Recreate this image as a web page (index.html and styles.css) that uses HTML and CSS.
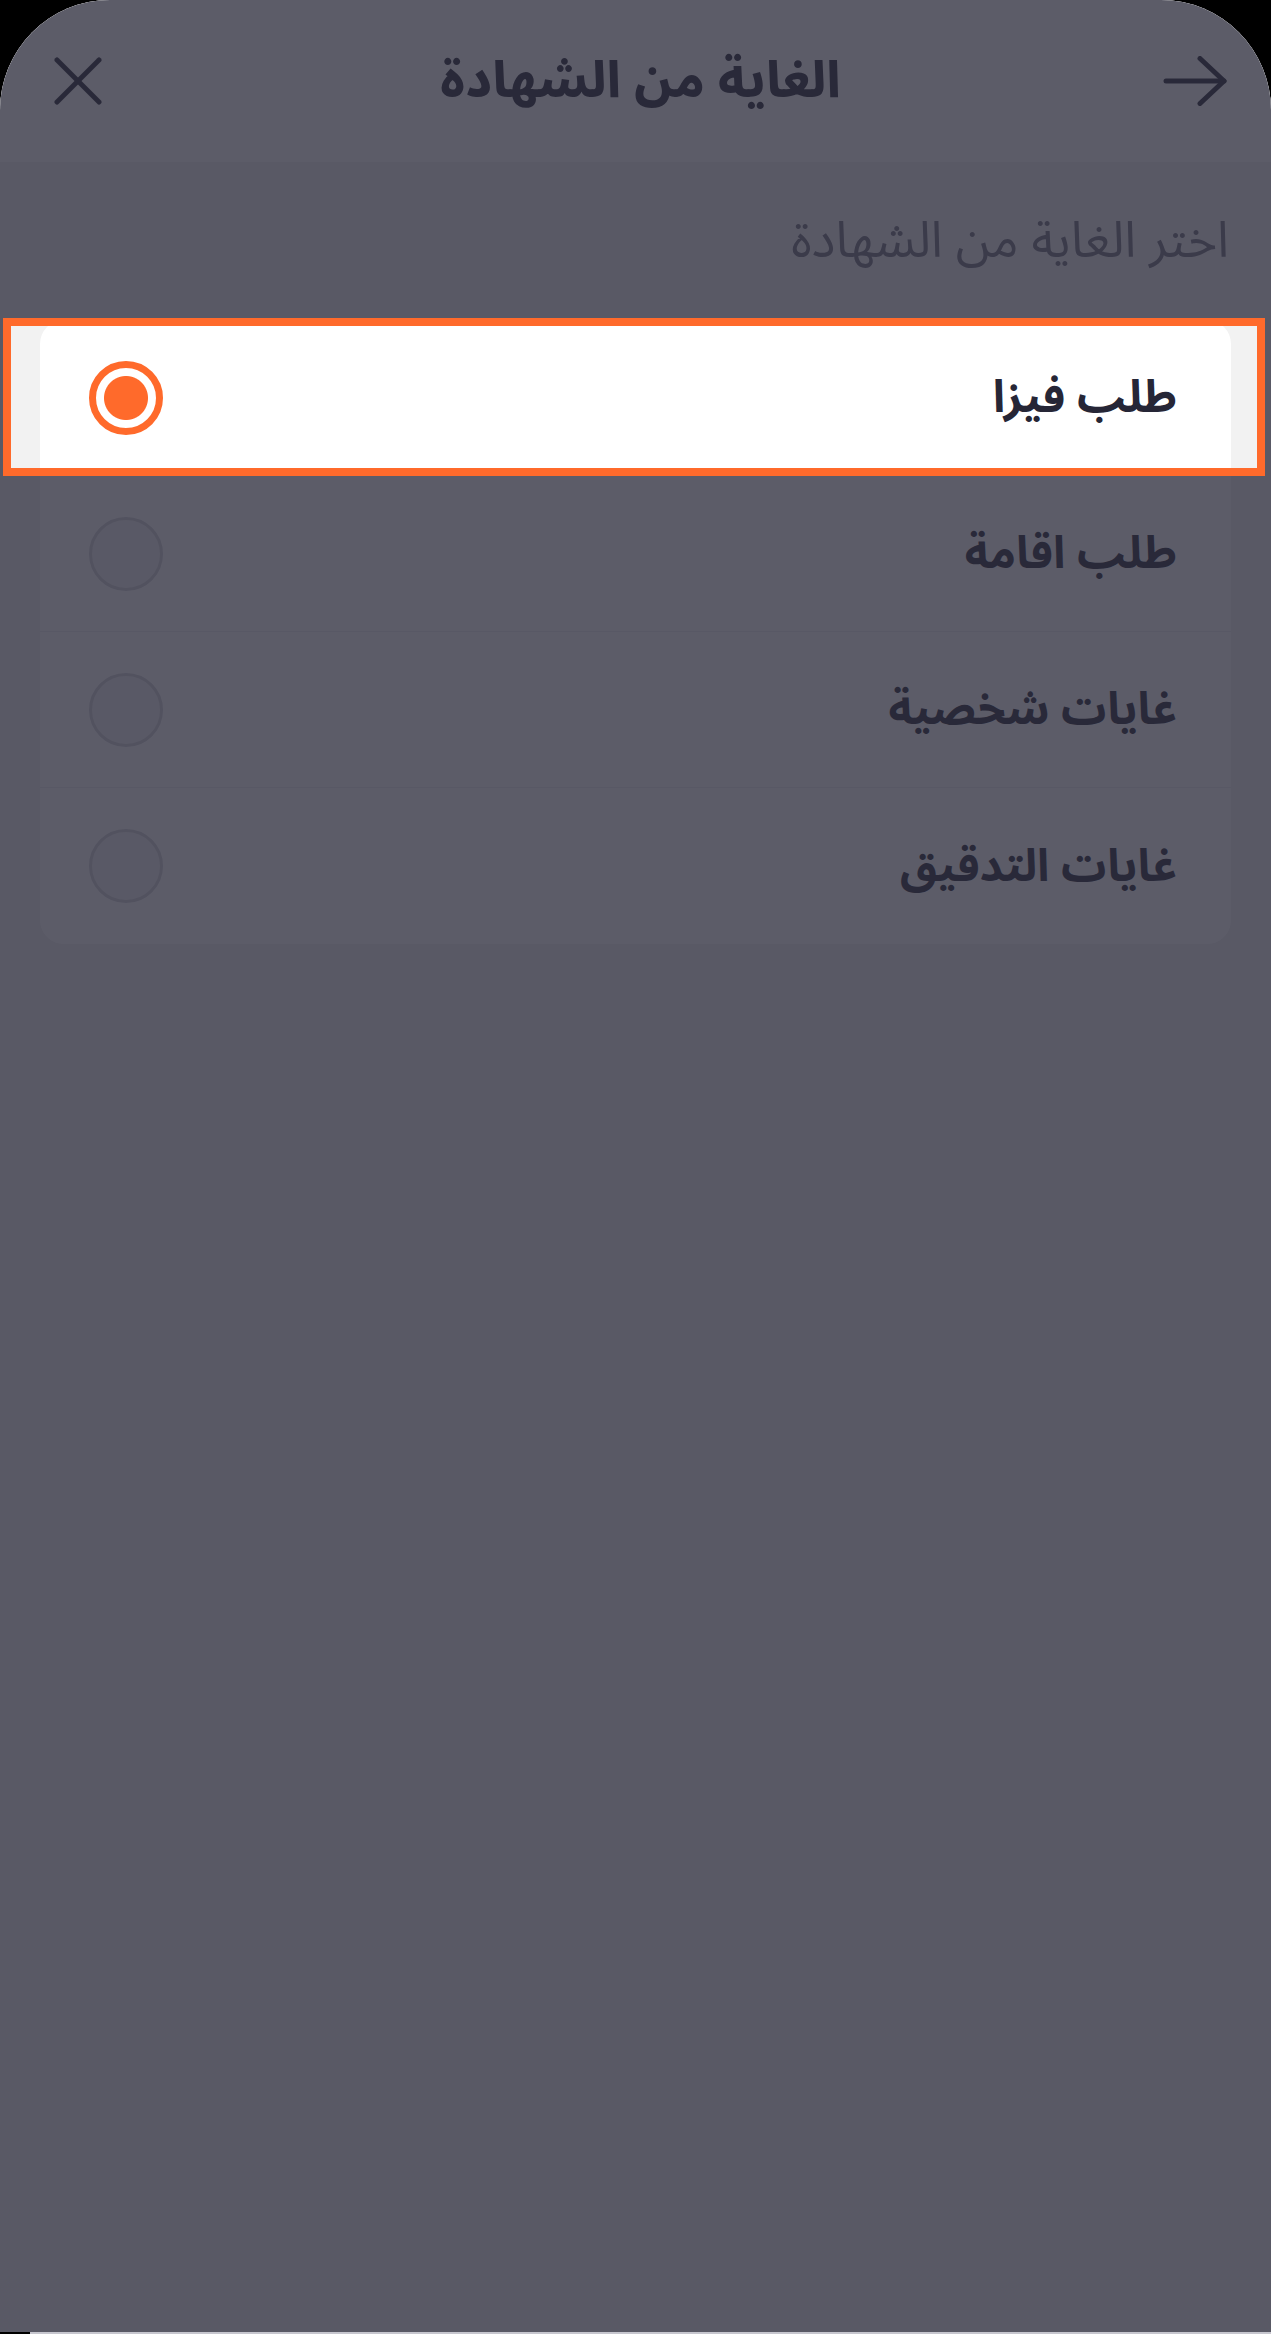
FILE: index.html
```html
<!DOCTYPE html>
<html lang="ar" dir="rtl">
<head>
    <meta charset="UTF-8">
    <meta name="viewport" content="width=device-width, initial-scale=1.0">
    <title>الغاية من الشهادة</title>
    <link rel="stylesheet" href="styles.css">
</head>
<body>
    <div class="screen">
        <header class="top-bar">
            <button class="icon-btn back-btn" aria-label="رجوع">
                <svg width="64" height="50" viewBox="0 0 64 50" fill="none" stroke="currentColor" stroke-width="5" stroke-linecap="round" stroke-linejoin="round">
                    <line x1="3" y1="25" x2="61" y2="25" />
                    <polyline points="37,2.5 61,25 37,47.5" />
                </svg>
            </button>
            <h1 class="page-title">الغاية من الشهادة</h1>
            <button class="icon-btn close-btn" aria-label="إغلاق">
                <svg width="48" height="48" viewBox="0 0 48 48" fill="none" stroke="currentColor" stroke-width="5" stroke-linecap="round">
                    <line x1="3" y1="3" x2="45" y2="45" />
                    <line x1="45" y1="3" x2="3" y2="45" />
                </svg>
            </button>
        </header>

        <main class="content">
            <p class="hint">اختر الغاية من الشهادة</p>

            <div class="options">
                <label class="option">
                    <span class="option-label">طلب فيزا</span>
                    <span class="radio checked"></span>
                </label>
                <label class="option">
                    <span class="option-label">طلب اقامة</span>
                    <span class="radio"></span>
                </label>
                <label class="option">
                    <span class="option-label">غايات شخصية</span>
                    <span class="radio"></span>
                </label>
                <label class="option">
                    <span class="option-label">غايات التدقيق</span>
                    <span class="radio"></span>
                </label>
            </div>
        </main>

        <!-- tour spotlight over the first option -->
        <div class="spotlight"></div>
    </div>
    <div class="home-line"></div>
</body>
</html>
```

FILE: styles.css
```css
* {
    box-sizing: border-box;
}

body {
    margin: 0;
    padding: 0;
    background-color: #000000;
    font-family: "Noto Sans Arabic", "DejaVu Sans", sans-serif;
    color: #262636;
}

.screen {
    position: relative;
    width: 1271px;
    height: 2332px;
    background-color: #f2f2f2;
    border-radius: 110px 110px 0 0;
    overflow: hidden;
}

.top-bar {
    display: grid;
    grid-template-columns: 1fr auto 1fr;
    align-items: center;
    height: 162px;
    padding: 0 44px 0 54px;
    background-color: #ffffff;
}

.icon-btn {
    display: flex;
    padding: 0;
    border: none;
    background: none;
    color: #262636;
}

.back-btn {
    justify-self: start;
}

.close-btn {
    justify-self: end;
}

.page-title {
    margin: 0;
    font-size: 50px;
    font-weight: 800;
    line-height: 1;
}

.content {
    padding: 45px 40px 0;
}

.hint {
    margin: 0 2px 44px 0;
    font-size: 50px;
    line-height: 69px;
    color: #70707f;
}

.options {
    background-color: #ffffff;
    border-radius: 24px;
}

.option {
    display: flex;
    align-items: center;
    justify-content: space-between;
    height: 156px;
    padding: 0 54px 0 49px;
    border-bottom: 1px solid #ececf0;
}

.option:last-child {
    border-bottom: none;
}

.option-label {
    font-size: 45px;
    font-weight: bold;
}

.radio {
    width: 74px;
    height: 74px;
    border-radius: 50%;
    border: 3px solid #d3d3d9;
    background-color: #f2f2f4;
}

.radio.checked {
    border: 7px solid #ff6a2b;
    background-color: #ffffff;
    background-image: radial-gradient(circle, #ff6a2b 0 21.5px, transparent 22.5px);
}

.spotlight {
    position: absolute;
    top: 318px;
    left: 3px;
    width: 1262px;
    height: 158px;
    border: 8px solid #ff6a2b;
    box-shadow: 0 0 0 3000px rgba(43, 43, 58, 0.77);
}

.home-line {
    height: 2px;
    margin-left: 30px;
    background-color: #c6c6ce;
}
```
